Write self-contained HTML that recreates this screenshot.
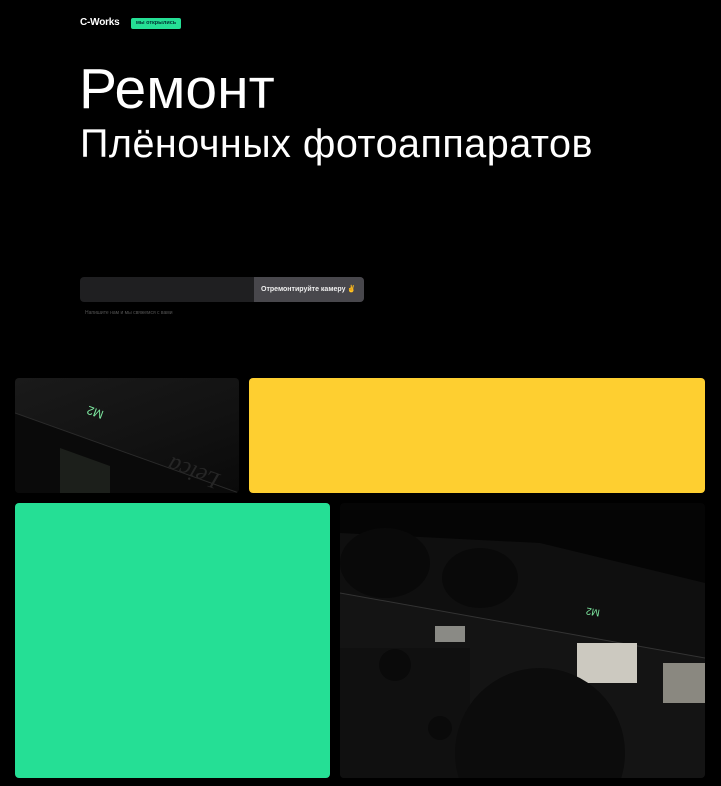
<!DOCTYPE html>
<html><head><meta charset="utf-8"><style>
*{margin:0;padding:0;box-sizing:border-box}
html,body{width:721px;height:786px;overflow:hidden}
body{background:#000;position:relative;font-family:"Liberation Sans",sans-serif;color:#fff}
.abs{position:absolute}
</style></head><body>
<div class="abs" style="left:80px;top:17px;font-size:10px;font-weight:bold;letter-spacing:-0.2px">C-Works</div>
<div class="abs" style="left:131px;top:18px;width:50px;height:11px;background:#25df95;border-radius:2px;color:#033;font-size:5.5px;font-weight:bold;line-height:11px;text-align:center">мы открылись</div>
<div class="abs" style="left:79px;top:56px;font-size:57px;line-height:66px">Ремонт</div>
<div class="abs" style="left:80px;top:122px;font-size:39.5px;line-height:44px;letter-spacing:0.5px;white-space:nowrap">Плёночных фотоаппаратов</div>
<div class="abs" style="left:80px;top:277px;width:284px;height:25px;background:#1f1f21;border-radius:4px;overflow:hidden">
<div class="abs" style="left:174px;top:0;width:110px;height:25px;background:#48474c;font-size:7px;font-weight:bold;line-height:25px;padding-left:7px;color:#eee">Отремонтируйте камеру <span style="color:#f5c342">✌</span></div></div>
<div class="abs" style="left:85px;top:310px;font-size:5px;color:#555">Напишите нам и мы свяжемся с вами</div>

<div class="abs" style="left:15px;top:378px;width:224px;height:115px;border-radius:4px;overflow:hidden;background:linear-gradient(160deg,#1a1a1a,#121212 55%,#0a0a0a)">
<svg width="224" height="115" class="abs" style="left:0;top:0">
<polygon points="0,35 224,115 0,115" fill="#0a0a0a"/>
<line x1="0" y1="35" x2="224" y2="115" stroke="#2a2a2a" stroke-width="1"/>
<polygon points="45,70 95,88 95,115 45,115" fill="#1c1f1b"/>
<text x="70" y="30" fill="#7ee8a0" font-size="12" font-family="Liberation Sans" transform="rotate(200 80 30)">M2</text>
<text x="140" y="75" fill="#262626" font-size="24" font-style="italic" font-family="Liberation Serif" transform="rotate(200 175 80)">Leica</text>
</svg></div>
<div class="abs" style="left:249px;top:378px;width:456px;height:115px;border-radius:4px;background:#fecf30"></div>
<div class="abs" style="left:15px;top:503px;width:315px;height:275px;border-radius:4px;background:#25df95"></div>
<div class="abs" style="left:340px;top:503px;width:365px;height:275px;border-radius:4px;overflow:hidden;background:#050505">
<svg width="365" height="275" class="abs" style="left:0;top:0">
<polygon points="0,30 200,40 365,80 365,275 0,275" fill="#0f0f0f"/>
<polygon points="0,90 365,155 365,275 0,275" fill="#141414"/>
<line x1="0" y1="90" x2="365" y2="155" stroke="#333"/>
<rect x="0" y="145" width="130" height="130" fill="#101010"/>
<ellipse cx="45" cy="60" rx="45" ry="35" fill="#090909"/>
<ellipse cx="140" cy="75" rx="38" ry="30" fill="#090909"/>
<rect x="95" y="123" width="30" height="16" fill="#8a8a85"/>
<rect x="237" y="140" width="60" height="40" fill="#ccc9c0"/>
<rect x="323" y="160" width="42" height="40" fill="#8a8880"/>
<circle cx="200" cy="250" r="85" fill="#0c0c0c"/>
<circle cx="55" cy="162" r="16" fill="#0a0a0a"/>
<circle cx="100" cy="225" r="12" fill="#0a0a0a"/>
<text x="250" y="110" fill="#7ee8a0" font-size="10" font-family="Liberation Sans" transform="rotate(190 255 108)">M2</text>
</svg></div>
</body></html>
